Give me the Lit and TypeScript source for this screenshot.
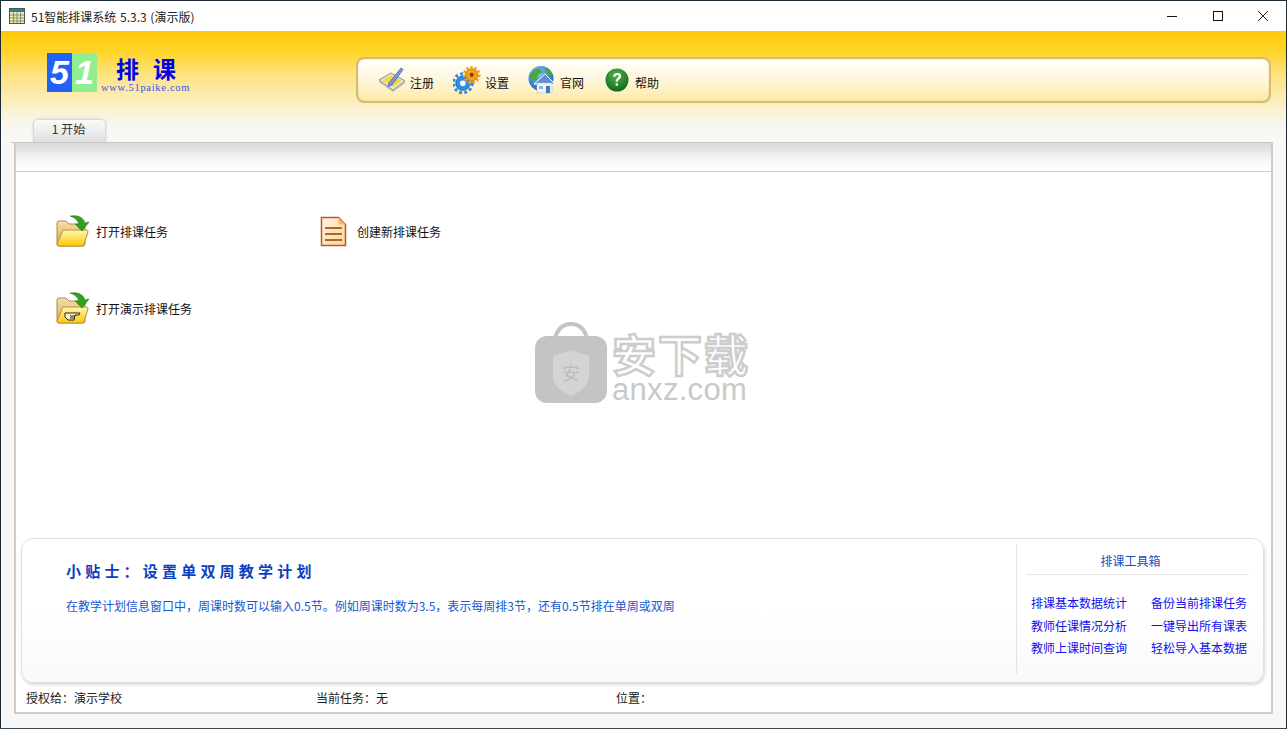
import { LitElement, html, css, svg } from 'lit';
import { customElement } from 'lit/decorators.js';

const folder = (hand = false) => svg`
  <svg class="icon" width="34" height="34" viewBox="0 0 34 34">
    <defs>
      <linearGradient id="fb" x1="0" y1="0" x2="0" y2="1"><stop offset="0" stop-color="#f6dfa8"/><stop offset="1" stop-color="#d9a94e"/></linearGradient>
      <linearGradient id="ff" x1="0" y1="0" x2="0" y2="1"><stop offset="0" stop-color="#fff6b8"/><stop offset="1" stop-color="#ffc800"/></linearGradient>
    </defs>
    <path d="M1 8q0-2 2-2h7l3 3h14q2 0 2 2v18q0 2-2 2H3q-2 0-2-2z" fill="url(#fb)" stroke="#b08a45"/>
    <path d="M7 15h23q2.500 0 2 2L28 29.500q-.5 1.500-2 1.500H3q-2 0-2-2z" fill="url(#ff)" stroke="#b8923f"/>
    ${hand ? svg`<path d="M9 21h15l-1 2h-4l-1 5h-6l-3-3z" fill="#fff7c0" stroke="#222" stroke-width="1"/><path d="M14 24h5M14 26h4" stroke="#222"/>` : ''}
    <path d="M14 1q12-2 15 7l4-1-7 9-7-7 4 0q-2-6-9-8z" fill="#2ea31f" stroke="#1c7a12" stroke-width=".6"/>
  </svg>`;

const doc = svg`
  <svg class="icon" width="28" height="32" viewBox="0 0 28 32">
    <defs><linearGradient id="dg" x1="0" y1="0" x2="1" y2="1"><stop offset="0" stop-color="#fff6e2"/><stop offset="1" stop-color="#fcd596"/></linearGradient></defs>
    <path d="M1.500 1.500h17l7 7v21h-24z" fill="url(#dg)" stroke="#c0562a" stroke-width="1.500"/>
    <path d="M18.500 1.500v7h7z" fill="#f8b65a"/>
    <path d="M5 12h17M5 18h17M5 24h17" stroke="#a8693a" stroke-width="2"/>
  </svg>`;

const pencil = svg`
  <svg width="28" height="28" viewBox="0 0 28 28">
    <path d="M1 14 13 7l14 8-12 9z" fill="#e8e8dc" stroke="#8a8a80"/>
    <path d="M4 14 13 9l11 6-9 6z" fill="#f5d84a"/>
    <path d="M1 14v2l14 10 12-9v-2l-12 9z" fill="#b8b8ac"/>
    <path d="M11 17 23 2l2 1.500L14 19l-4 1.500z" fill="#7d98d8" stroke="#4a64a8" stroke-width=".8"/>
  </svg>`;

const gears = svg`
  <svg width="30" height="30" viewBox="0 0 30 30">
    <circle cx="10.500" cy="18.500" r="7.500" fill="#2f8ee8" stroke="#1560b0"/>
    <circle cx="10.500" cy="18.500" r="10" fill="none" stroke="#2f8ee8" stroke-width="3.500" stroke-dasharray="3 2.500"/>
    <circle cx="10.500" cy="18.500" r="3" fill="#fff"/>
    <circle cx="20" cy="9.500" r="6.500" fill="#f3a21f" stroke="#c96f10"/>
    <circle cx="20" cy="9.500" r="8" fill="none" stroke="#f0a024" stroke-width="3" stroke-dasharray="2.500 2"/>
    <circle cx="20" cy="9.500" r="2.200" fill="#8a3d10"/>
  </svg>`;

const globe = svg`
  <svg width="28" height="28" viewBox="0 0 28 28">
    <defs><radialGradient id="gl" cx=".4" cy=".3" r=".8"><stop offset="0" stop-color="#7cc4f4"/><stop offset="1" stop-color="#1458b0"/></radialGradient></defs>
    <circle cx="13" cy="12.500" r="12.500" fill="url(#gl)"/>
    <path d="M3 8q4-6 9-5l2 3-4 3-1 5-4 1-3-3zM17 2q6 2 7 7l-3 1-3-4z" fill="#4aa83a"/>
    <path d="M6 18 17 8l10 10z" fill="#5b8fd0" stroke="#fff" stroke-width="1"/>
    <path d="M9 17h15v10H9z" fill="#f4f4f4" stroke="#b8b8b8" stroke-width=".6"/>
    <path d="M18 20h4v7h-4z" fill="#3a78c8"/><path d="M11 20h4v3h-4z" fill="#8ab4e0"/>
  </svg>`;

const helpIcon = svg`
  <svg width="24" height="24" viewBox="0 0 24 24">
    <defs><radialGradient id="hg" cx=".45" cy=".3" r=".8"><stop offset="0" stop-color="#4fb54a"/><stop offset="1" stop-color="#0c5c14"/></radialGradient></defs>
    <circle cx="12" cy="12" r="11.500" fill="url(#hg)"/>
    <path d="M8 8.500q.5-3.500 4.200-3.500 4 0 4 3.300 0 2-2.200 3.200-1.200.7-1.200 2.200h-2.200q0-2.500 1.600-3.500 1.500-1 1.500-2 0-1.300-1.500-1.300-1.600 0-2 1.800zM10.600 15.300h2.300v2.500h-2.300z" fill="#fff"/>
  </svg>`;

const tools = [
  { label: '注册', icon: pencil },
  { label: '设置', icon: gears },
  { label: '官网', icon: globe },
  { label: '帮助', icon: helpIcon },
];

const links = [
  '排课基本数据统计', '备份当前排课任务',
  '教师任课情况分析', '一键导出所有课表',
  '教师上课时间查询', '轻松导入基本数据',
];

@customElement('app-root')
class AppRoot extends LitElement {
  static styles = css`
    :host {
      display: block;
      width: 1287px;
      height: 729px;
      overflow: hidden;
      font: 12px "Noto Sans CJK SC", "Liberation Sans", sans-serif;
      color: #111;
    }

    .window {
      display: flex;
      flex-direction: column;
      box-sizing: border-box;
      height: 729px;
      border: 1px solid #1c2a38;
      border-bottom-color: #3a4652;
      background: #f7f7f7;
    }

    .titlebar {
      display: flex;
      align-items: center;
      flex: none;
      height: 30px;
      padding-left: 8px;
      background: #fff;
      color: #222;
    }

    .titlebar svg {
      margin-right: 6px;
    }

    .title-text {
      flex: 1;
      word-spacing: 1px;
    }

    .win-btns {
      display: flex;
      align-items: center;
      gap: 29.500px;
      padding-right: 15px;
    }

    .win-btns svg {
      margin-right: 0;
    }

    .head {
      flex: none;
      height: 111px;
      background: linear-gradient(#ffcb08 0, #ffd52c 22px, #fde27c 42px, #fbeebb 70px, #f8f6ee 92px, #f8f8f6 111px);
      display: flex;
      flex-direction: column;
    }

    .head-top {
      display: flex;
      flex: none;
      height: 88px;
    }

    .logo {
      width: 355px;
      padding: 22px 0 0 46px;
      box-sizing: border-box;
      display: flex;
      flex: none;
    }

    .logo-num {
      width: 25px;
      height: 39px;
      display: flex;
      align-items: center;
      justify-content: center;
      color: #fff;
      font: italic bold 34px "Liberation Sans", sans-serif;
    }

    .n5 {
      background: #2261f3;
    }

    .n1 {
      background: #90ee90;
    }

    .logo-text {
      margin-left: 4px;
      display: flex;
      flex-direction: column;
    }

    .logo-cn {
      margin-left: 15px;
      color: #0000f0;
      font-size: 23px;
      font-weight: 700;
      line-height: 30px;
      letter-spacing: 14px;
      white-space: nowrap;
    }

    .logo-url {
      color: #3a50f0;
      font: 10.500px/10px "Liberation Serif", serif;
      letter-spacing: .7px;
    }

    .toolbar {
      margin-top: 26px;
      width: 915px;
      height: 46px;
      box-sizing: border-box;
      display: flex;
      align-items: center;
      padding-left: 20px;
      border: 2px solid #d9bb6c;
      border-radius: 8px;
      background: linear-gradient(#fffffb, #fff8e0 45%, #fde9a8);
      box-shadow: inset 0 0 1px #a89868;
    }

    .tool {
      display: flex;
      align-items: center;
      width: 75px;
      height: 34px;
    }

    .tool-icon {
      flex: none;
      width: 28px;
      display: flex;
      justify-content: center;
    }

    .tool span {
      margin-left: 4px;
      margin-top: 5px;
      color: #111;
    }

    .tabs {
      padding-left: 32px;
      height: 23px;
    }

    .tab {
      width: 73px;
      height: 23px;
      box-sizing: border-box;
      border: 1px solid #d8d8d8;
      border-bottom: none;
      border-radius: 5px 5px 0 0;
      background: linear-gradient(#fbfbfb, #dedede);
      box-shadow: 0 0 3px #d4d4d4;
      padding-right: 2px;
      text-align: center;
      line-height: 18px;
      color: #333;
    }

    .body {
      flex: 1;
      min-height: 0;
      margin-left: 10px;
      display: flex;
      flex-direction: column;
    }

    .panel {
      flex: none;
      width: 1262px;
      height: 572px;
      box-sizing: border-box;
      border-top: 1px solid #c8c8c8;
      display: flex;
      flex-direction: column;
      background: #f7f7f7;
    }

    .page {
      flex: 1;
      min-height: 0;
      margin-left: 3px;
      display: flex;
      flex-direction: column;
      border-left: 2px solid #ccc;
      border-right: 2px solid #ccc;
      border-bottom: 2px solid #ccc;
      background: #fff;
      position: relative;
    }

    .band {
      flex: none;
      height: 28px;
      background: linear-gradient(#d9d9d9, #f6f6f6 60%, #fff);
      border-bottom: 1px solid #ccc;
    }

    .actions {
      flex: 1;
      min-height: 0;
      display: grid;
      grid-template-columns: 261px 1fr;
      grid-auto-rows: 77px;
      padding: 43px 0 0 40px;
      align-content: start;
    }

    .action {
      display: flex;
      align-items: center;
      height: 34px;
      line-height: 32px;
    }

    .action .icon {
      flex: none;
      margin-right: 6px;
    }

    .action.doc {
      padding-left: 3px;
    }

    .action.doc .icon {
      margin-right: 9px;
    }

    .card {
      flex: none;
      height: 145px;
      margin: 0 7px 0 5px;
      box-sizing: border-box;
      display: flex;
      border: 1px solid #e0e0e0;
      border-radius: 12px;
      background: linear-gradient(#fff 50%, #f9f9fb);
      box-shadow: 1px 2px 3px #d8d8d8;
    }

    .tip {
      flex: 1;
      padding: 20px 0 0 44px;
      color: #1558d6;
    }

    .tip h3 {
      margin: 0 0 14px;
      color: #0b3fc0;
      font-size: 15px;
      line-height: 24px;
      font-weight: 700;
      letter-spacing: 4.200px;
    }

    .tip p {
      margin: 0;
      line-height: 18px;
    }

    .box {
      flex: none;
      width: 247px;
      margin: 5px 0 8px;
      box-sizing: border-box;
      border-left: 1px solid #e4e4e4;
      padding: 0 14px 0 9px;
    }

    .box-title {
      height: 31px;
      line-height: 34px;
      box-sizing: border-box;
      border-bottom: 1px solid #e6e6e6;
      padding-right: 14px;
      text-align: center;
      color: #1a4fb8;
    }

    .box-links {
      display: grid;
      grid-template-columns: 120px 1fr;
      grid-auto-rows: 22.500px;
      padding: 19px 0 0 5px;
      color: #1010f0;
      white-space: nowrap;
    }

    .status {
      flex: none;
      height: 29px;
      display: flex;
      align-items: center;
      padding-left: 10px;
      color: #222;
    }

    .status span {
      width: 290px;
    }

    .status span:last-child {
      width: auto;
      margin-left: 10px;
    }

    .mark {
      position: absolute;
      left: 519px;
      top: 179px;
      display: flex;
      gap: 5px;
      pointer-events: none;
    }

    .mark-text {
      padding-top: 7px;
    }

    .mark-cn {
      font-size: 44px;
      font-weight: 700;
      line-height: 48px;
      color: #fff;
      letter-spacing: 2px;
      -webkit-text-stroke: 2.500px #cdcdcd;
      white-space: nowrap;
    }

    .mark-en {
      font: 31px/26px "Liberation Sans", sans-serif;
      color: #c9c9c9;
      letter-spacing: .3px;
    }
  `;

  protected render() {
    return html`<div class="window">
      <div class="titlebar">
        <svg width="16" height="16" viewBox="0 0 16 16">
          <rect x=".5" y=".5" width="15" height="15" fill="#f3ecb0" stroke="#555"/>
          <rect x="1" y="1" width="14" height="3" fill="#1b8a8a"/>
          <path d="M1 7h14M1 10h14M1 13h14M4.500 4v11M8 4v11M11.500 4v11" stroke="#777" stroke-width=".8"/>
        </svg>
        <span class="title-text">51智能排课系统 5.3.3 (演示版)</span>
        <div class="win-btns">
          <svg width="16" height="12" viewBox="0 0 16 12"><path d="M3 6.500h10" stroke="#111"/></svg>
          <svg width="16" height="12" viewBox="0 0 16 12"><rect x="3.500" y="1.500" width="9" height="9" fill="none" stroke="#111"/></svg>
          <svg width="16" height="12" viewBox="0 0 16 12"><path d="M3 1l10 10M13 1 3 11" stroke="#222"/></svg>
        </div>
      </div>

      <div class="head">
        <div class="head-top">
          <div class="logo">
            <div class="logo-num n5">5</div>
            <div class="logo-num n1">1</div>
            <div class="logo-text">
              <div class="logo-cn">排课</div>
              <div class="logo-url">www.51paike.com</div>
            </div>
          </div>
          <div class="toolbar">
            ${tools.map((t) => html`<div class="tool"><div class="tool-icon">${t.icon}</div><span>${t.label}</span></div>`)}
          </div>
        </div>
        <div class="tabs"><div class="tab">1 开始</div></div>
      </div>

      <div class="body">
        <div class="panel">
          <div class="page">
            <div class="band"></div>
            <div class="actions">
              <div class="action">${folder()}打开排课任务</div>
              <div class="action doc">${doc}创建新排课任务</div>
              <div class="action">${folder(true)}打开演示排课任务</div>
            </div>
            <div class="card">
              <div class="tip">
                <h3>小贴士：设置单双周教学计划</h3>
                <p>在教学计划信息窗口中，周课时数可以输入0.5节。例如周课时数为3.5，表示每周排3节，还有0.5节排在单周或双周</p>
              </div>
              <div class="box">
                <div class="box-title">排课工具箱</div>
                <div class="box-links">${links.map((l) => html`<div>${l}</div>`)}</div>
              </div>
            </div>
            <div class="status">
              <span>授权给：演示学校</span>
              <span>当前任务：无</span>
              <span>位置：</span>
            </div>
            <div class="mark">
              <svg width="72" height="82" viewBox="0 0 72 82">
                <path d="M20 16Q24 2 36 2t16 14" fill="none" stroke="#c4c4c4" stroke-width="4"/>
                <rect x="0" y="14" width="72" height="67" rx="12" fill="#c4c4c4"/>
                <path d="M36 28l18 6v20q0 12-18 20-18-8-18-20V34z" fill="#d4d4d4"/>
                <text x="36" y="58" text-anchor="middle" font-size="18" font-family="Noto Sans CJK SC" fill="#bdbdbd">安</text>
              </svg>
              <div class="mark-text">
                <div class="mark-cn">安下载</div>
                <div class="mark-en">anxz.com</div>
              </div>
            </div>
          </div>
        </div>
      </div>
    </div>`;
  }
}
